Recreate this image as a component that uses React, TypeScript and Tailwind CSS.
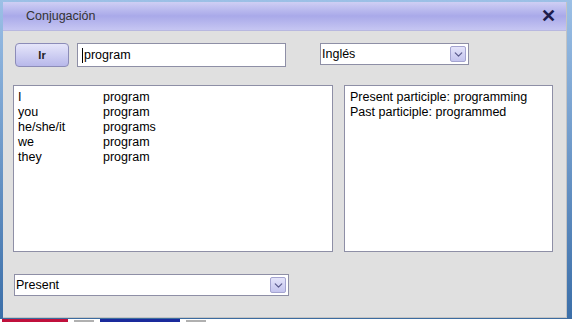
import { ChevronDown } from 'lucide-react'

const font = { fontFamily: '"Liberation Sans", Arial, sans-serif' }

const rows = [
  ['I', 'program'],
  ['you', 'program'],
  ['he/she/it', 'programs'],
  ['we', 'program'],
  ['they', 'program'],
]

function Combo({ value, className }: { value: string; className: string }) {
  return (
    <div className={`flex items-center bg-white border border-[#8e8fa6] ${className}`}>
      <span className="flex-1 pl-[1px] text-[12.5px] text-black leading-none">{value}</span>
      <span className="mr-[2px] w-[16px] h-[16px] flex items-center justify-center rounded-[2px] border border-[#a4a4d0] bg-gradient-to-b from-[#e4e4fa] to-[#c4c4ee]">
        <ChevronDown size={13} strokeWidth={2.2} className="text-[#5a5a8c]" />
      </span>
    </div>
  )
}

export default function App() {
  return (
    <div className="w-[572px] h-[323px] overflow-hidden relative bg-gradient-to-b from-[#9cc0e6] to-[#3a6ea8]" style={font}>
      {/* page behind the dialog, only a sliver shows */}
      <div className="absolute left-0 right-0 bottom-0 h-[5px] bg-white border-t border-[#3c6ca0] flex items-end gap-[6px] pl-[2px] pb-[1px]">
        <span className="w-[66px] h-[3px] bg-[#c0103c]" />
        <span className="w-[20px] h-[2px] bg-[#b0b0b0]" />
        <span className="w-[80px] h-[3px] bg-[#1a2a9c]" />
        <span className="w-[20px] h-[2px] bg-[#b0b0b0]" />
      </div>
      <div className="absolute left-[3px] top-[2px] w-[564px] h-[316px] flex flex-col bg-[#e0e0e0] border-r border-b border-[#c4c4c4]">
        <div className="h-[29px] shrink-0 flex items-center justify-between bg-gradient-to-b from-[#cfcff4] via-[#a9a9e9] to-[#c6c6f2] border-b border-[#b8b8e0]">
          <span className="ml-[23px] text-[12.5px] text-[#333]">Conjugación</span>
          <span className="mr-[10px] text-[18px] font-bold text-[#1c1c4a] leading-none">✕</span>
        </div>
        <div className="flex flex-col pl-[12px] pt-[12px]">
          <div className="flex items-start">
            <button className="w-[54px] h-[24px] rounded-[4px] border border-[#8c8cb8] bg-gradient-to-b from-[#e6e6fa] to-[#b8b8ea] text-[11px] font-bold text-[#222]">
              Ir
            </button>
            <div className="ml-[8px] w-[209px] h-[24px] bg-white border border-[#8e8fa6] flex items-center pl-[4px] text-[12.5px] text-black">
              <span className="w-[1px] h-[15px] bg-black mr-[1px]" />
              program
            </div>
            <Combo value="Inglés" className="ml-[34px] w-[149px] h-[22px]" />
          </div>
          <div className="flex mt-[18px] h-[167px]">
            <div className="w-[320px] -ml-[2px] bg-white border border-[#8e8fa6] pt-[4px] pl-[4px] text-[12.5px] text-black leading-[15px]">
              {rows.map(([p, v]) => (
                <div key={p} className="flex">
                  <span className="w-[85px]">{p}</span>
                  <span>{v}</span>
                </div>
              ))}
            </div>
            <div className="ml-[11px] w-[209px] bg-white border border-[#8e8fa6] pt-[4px] pl-[5px] text-[12.5px] text-black leading-[15px]">
              <div>Present participle: programming</div>
              <div>Past participle: programmed</div>
            </div>
          </div>
          <Combo value="Present" className="mt-[22px] -ml-[1px] w-[275px] h-[22px]" />
        </div>
      </div>
    </div>
  )
}
